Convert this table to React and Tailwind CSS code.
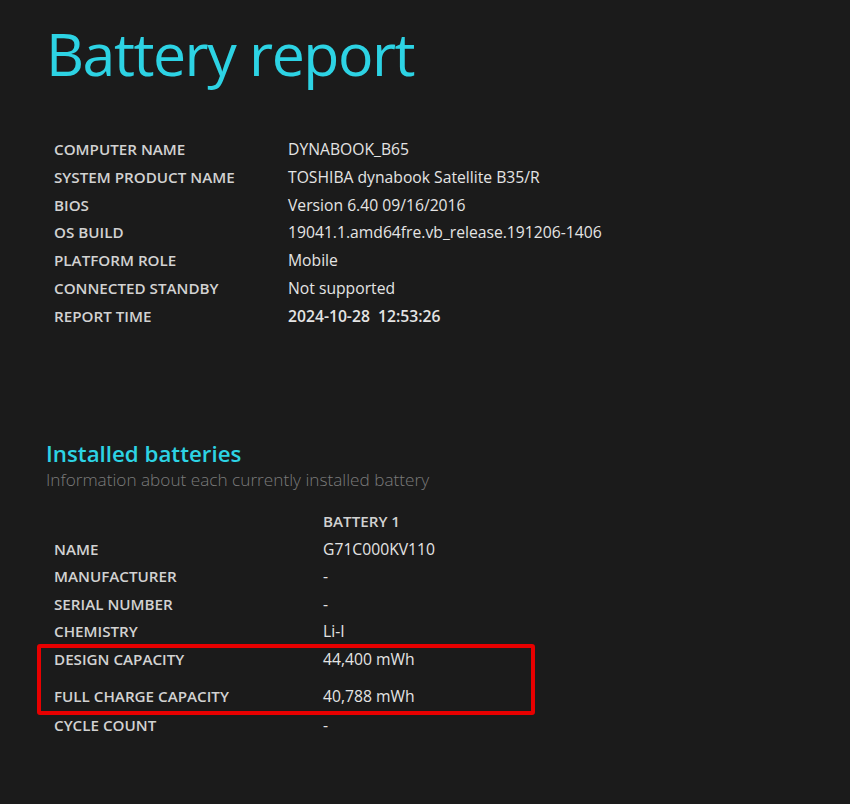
const systemInfo = [
  ['COMPUTER NAME', 'DYNABOOK_B65'],
  ['SYSTEM PRODUCT NAME', 'TOSHIBA dynabook Satellite B35/R'],
  ['BIOS', 'Version 6.40 09/16/2016'],
  ['OS BUILD', '19041.1.amd64fre.vb_release.191206-1406'],
  ['PLATFORM ROLE', 'Mobile'],
  ['CONNECTED STANDBY', 'Not supported'],
];

function Row({ label, value, labelWidth, className = 'leading-[27.5px]', bold = false }) {
  return (
    <div className={`flex items-baseline ${className}`}>
      <div className="shrink-0 text-[15.2px] font-semibold text-[#d2d2d2]" style={{ width: labelWidth }}>
        {label}
      </div>
      <div className={`whitespace-pre text-[15.7px] text-[#e4e4e4] ${bold ? 'font-semibold' : ''}`}>{value}</div>
    </div>
  );
}

export default function App() {
  return (
    <div
      className="min-h-[804px] w-[850px] bg-[#1b1b1b] pl-[46px] pt-[24px]"
      style={{ fontFamily: '"Open Sans", "Noto Sans", sans-serif' }}
    >
      <h1 className="text-[59px] leading-[59px] font-normal tracking-[-1.5px] text-[#2dd3e4]">Battery report</h1>

      {/* system info */}
      <div className="mt-[53px] pl-[8px]">
        {systemInfo.map(([l, v]) => (
          <Row key={l} label={l} value={v} labelWidth={234} className="leading-[27.8px]" />
        ))}
        <Row label="REPORT TIME" value="2024-10-28  12:53:26" labelWidth={234} className="leading-[27.8px]" bold />
      </div>

      <h2 className="mt-[109px] text-[22.3px] leading-[28px] font-semibold text-[#2dd3e4]">Installed batteries</h2>
      <p className="text-[17.2px] leading-[24px] font-light text-[#7a7a7a]">
        Information about each currently installed battery
      </p>

      {/* battery table */}
      <div className="mt-[16.5px] pl-[8px]">
        <div className="flex leading-[27.5px]">
          <div className="w-[269px] shrink-0" />
          <div className="text-[15.2px] font-semibold text-[#d2d2d2]">BATTERY 1</div>
        </div>
        <Row label="NAME" value="G71C000KV110" labelWidth={269} />
        <Row label="MANUFACTURER" value="-" labelWidth={269} />
        <Row label="SERIAL NUMBER" value="-" labelWidth={269} />
        <Row label="CHEMISTRY" value="Li-I" labelWidth={269} />
        <div className="-mt-[2px] ml-[-17px] w-[498px] rounded-[3px] border-4 border-[#e80000] pb-[4px] pl-[13px]">
          <Row label="DESIGN CAPACITY" value="44,400 mWh" labelWidth={269} className="leading-[22px]" />
          <Row label="FULL CHARGE CAPACITY" value="40,788 mWh" labelWidth={269} className="mt-[15px] leading-[22px]" />
        </div>
        <Row label="CYCLE COUNT" value="-" labelWidth={269} className="-mt-[4px] leading-[28px]" />
      </div>
    </div>
  );
}
